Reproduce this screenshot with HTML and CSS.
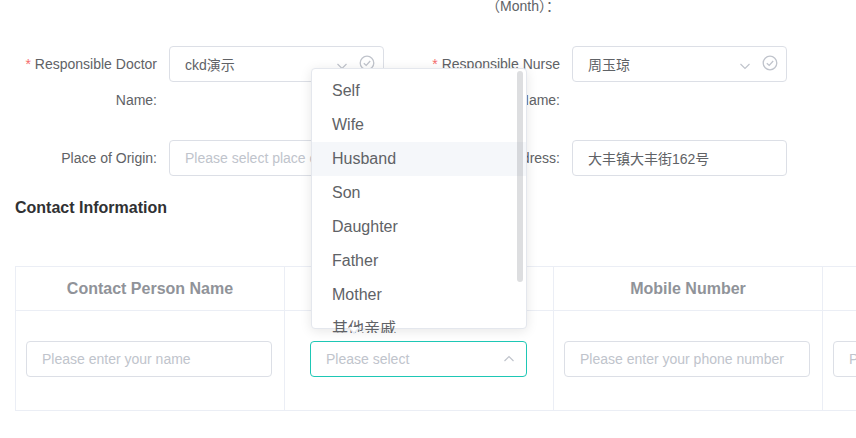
FILE: index.html
```html
<!DOCTYPE html>
<html lang="en">
<head>
<meta charset="utf-8">
<title>Patient Form</title>
<link rel="stylesheet" href="styles.css">
</head>
<body>
<div class="page">
  <div class="form">
    <div class="item">
      <div class="label">Dialysis Start Date:</div>
      <div class="control"></div>
    </div>
    <div class="item">
      <div class="label">Dialysis Age<br>（Month）：</div>
      <div class="control"></div>
    </div>

    <div class="item">
      <div class="label"><span class="req">*</span>Responsible Doctor Name:</div>
      <div class="control">
        <div class="input select">
          <span class="value">ckd演示</span>
          <svg class="chev" width="12" height="12" viewBox="0 0 12 12"><polyline points="1.5,4 6,8.5 10.5,4" fill="none" stroke="#c0c4cc" stroke-width="1.2"/></svg>
          <svg class="check" width="16" height="16" viewBox="0 0 16 16"><circle cx="8" cy="8" r="6.8" fill="none" stroke="#c0c4cc" stroke-width="1.3"/><polyline points="4.8,8.2 7.2,10.4 11.2,6" fill="none" stroke="#c0c4cc" stroke-width="1.3"/></svg>
        </div>
      </div>
    </div>
    <div class="item">
      <div class="label"><span class="req">*</span>Responsible Nurse Name:</div>
      <div class="control">
        <div class="input select">
          <span class="value">周玉琼</span>
          <svg class="chev" width="12" height="12" viewBox="0 0 12 12"><polyline points="1.5,4 6,8.5 10.5,4" fill="none" stroke="#c0c4cc" stroke-width="1.2"/></svg>
          <svg class="check" width="16" height="16" viewBox="0 0 16 16"><circle cx="8" cy="8" r="6.8" fill="none" stroke="#c0c4cc" stroke-width="1.3"/><polyline points="4.8,8.2 7.2,10.4 11.2,6" fill="none" stroke="#c0c4cc" stroke-width="1.3"/></svg>
        </div>
      </div>
    </div>

    <div class="item">
      <div class="label">Place of Origin:</div>
      <div class="control">
        <div class="input"><span class="ph">Please select place of origin</span></div>
      </div>
    </div>
    <div class="item">
      <div class="label">Home Address:</div>
      <div class="control">
        <div class="input"><span class="value">大丰镇大丰街162号</span></div>
      </div>
    </div>
  </div>

  <div class="title">Contact Information</div>

  <div class="table">
    <div class="th">Contact Person Name</div>
    <div class="th">Relationship</div>
    <div class="th">Mobile Number</div>
    <div class="th">ID Number</div>

    <div class="td"><div class="input wide"><span class="ph">Please enter your name</span></div></div>
    <div class="td">
      <div class="input select active narrow">
        <span class="ph">Please select</span>
        <svg class="chev up" width="12" height="12" viewBox="0 0 12 12"><polyline points="1.5,8 6,3.5 10.5,8" fill="none" stroke="#c0c4cc" stroke-width="1.2"/></svg>
      </div>
    </div>
    <div class="td"><div class="input wide"><span class="ph">Please enter your phone number</span></div></div>
    <div class="td"><div class="input wide"><span class="ph">Please enter ID number</span></div></div>
  </div>
</div>

<div class="dropdown">
  <ul class="options">
    <li>Self</li>
    <li>Wife</li>
    <li class="hover">Husband</li>
    <li>Son</li>
    <li>Daughter</li>
    <li>Father</li>
    <li>Mother</li>
    <li>其他亲戚</li>
    <li>Other</li>
  </ul>
  <div class="thumb"></div>
  <div class="arrow"></div>
</div>
</body>
</html>
```
FILE: styles.css
```css
html, body {
  margin: 0;
  padding: 0;
  background: #fff;
  overflow: hidden;
  width: 856px;
  height: 438px;
}
body {
  font-family: "Liberation Sans", Arial, "Noto Sans CJK SC", sans-serif;
  font-size: 14px;
  color: #606266;
}
.page {
  margin-top: -48px;
  padding-left: 15px;
  width: 1200px;
}
.form {
  display: grid;
  grid-template-columns: 403px 403px;
}
.item {
  display: flex;
  align-items: flex-start;
  margin-bottom: 22px;
}
.label {
  width: 154px;
  box-sizing: border-box;
  padding-right: 12px;
  text-align: right;
  line-height: 36px;
  font-size: 14px;
  color: #606266;
}
.req {
  color: #f56c6c;
  margin-right: 4px;
}
.control {
  width: 215px;
}
.input {
  box-sizing: border-box;
  height: 36px;
  border: 1px solid #dcdfe6;
  border-radius: 4px;
  padding: 0 15px;
  display: flex;
  align-items: center;
  font-size: 14px;
  color: #606266;
  background: #fff;
  white-space: nowrap;
  overflow: hidden;
  text-align: left;
}
.input .value {
  flex: 1;
}
.ph {
  color: #c0c4cc;
  flex: 1;
}
.select {
  padding-right: 8px;
}
.chev {
  flex: none;
  margin-left: 4px;
  margin-top: 3px;
}
.chev.up {
  margin-top: 0;
  margin-right: 3px;
}
.check {
  flex: none;
  margin-left: 11px;
  margin-bottom: 3px;
}
.title {
  font-size: 16px;
  font-weight: bold;
  color: #303133;
  line-height: 18px;
  padding-top: 1px;
  margin-bottom: 49px;
}
.table {
  display: grid;
  grid-template-columns: repeat(4, 269px);
  border-top: 1px solid #ebeef5;
  border-left: 1px solid #ebeef5;
}
.th, .td {
  border-right: 1px solid #ebeef5;
  border-bottom: 1px solid #ebeef5;
}
.th {
  height: 43px;
  line-height: 43px;
  text-align: center;
  font-size: 16px;
  font-weight: bold;
  color: #909399;
}
.td {
  height: 100px;
  box-sizing: border-box;
  padding: 30px 0 0 10px;
}
.wide {
  width: 246px;
}
.narrow {
  width: 217px;
  margin-left: 15px;
}
.active {
  border-color: #1ec7b5;
}
.dropdown {
  position: absolute;
  left: 311px;
  top: 68px;
  width: 216px;
  height: 261px;
  box-sizing: border-box;
  border: 1px solid #e4e7ed;
  border-radius: 4px;
  background: #fff;
  box-shadow: 0 2px 12px 0 rgba(0, 0, 0, 0.1);
}
.options {
  list-style: none;
  margin: 0;
  padding: 5px 0 0;
  height: 259px;
  overflow: hidden;
}
.options li {
  height: 34px;
  line-height: 34px;
  padding: 0 20px;
  font-size: 16px;
  color: #606266;
  white-space: nowrap;
}
.options li.hover {
  background: #f5f7fa;
}
.thumb {
  position: absolute;
  right: 3px;
  top: 2px;
  width: 6px;
  height: 211px;
  border-radius: 4px;
  background: rgba(144, 147, 153, 0.3);
}
.arrow {
  position: absolute;
  left: 36px;
  bottom: -6px;
  width: 0;
  height: 0;
  border-left: 6px solid transparent;
  border-right: 6px solid transparent;
  border-top: 6px solid #e4e7ed;
}
.arrow::after {
  content: "";
  position: absolute;
  left: -5px;
  top: -7px;
  border-left: 5px solid transparent;
  border-right: 5px solid transparent;
  border-top: 5px solid #fff;
}
```
